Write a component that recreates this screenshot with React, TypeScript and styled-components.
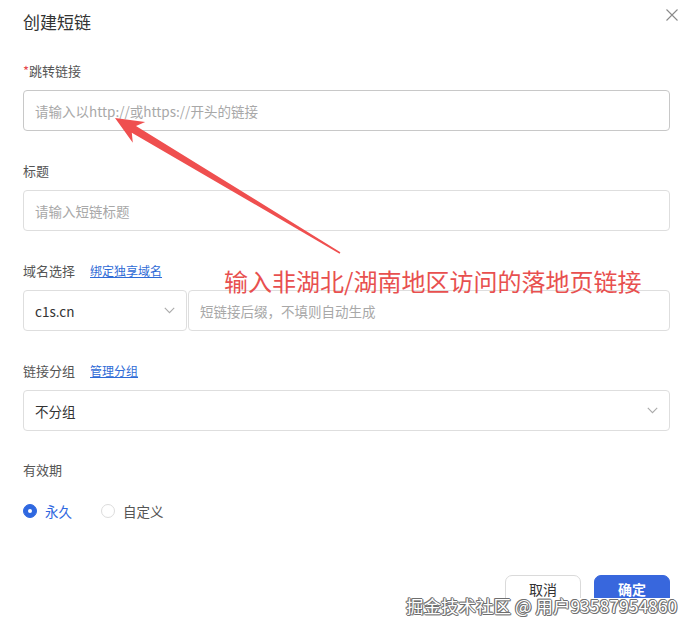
import React from "react";
import styled, { createGlobalStyle } from "styled-components";

const Global = createGlobalStyle`
  html, body { margin: 0; padding: 0; background: #fff; }
  body { font-family: "Noto Sans CJK SC", "Noto Sans", sans-serif; }
  * { box-sizing: border-box; }
`;

const Page = styled.div`
  position: relative;
  width: 694px;
  height: 632px;
  overflow: hidden;
  background: #fff;
  padding: 0 24px 0 23px;
`;

const Header = styled.div`
  display: flex;
  justify-content: space-between;
  align-items: center;
  height: 44px;
`;

const Title = styled.div`
  font-size: 17px;
  color: #333;
  line-height: 20px;
`;

const Close = styled.button`
  border: none;
  background: none;
  padding: 0;
  margin: -14px -9px 0 0;
  width: 14px;
  height: 14px;
  display: flex;
  align-items: center;
  justify-content: center;
`;

const Field = styled.div<{ $gap?: number }>`
  display: flex;
  flex-direction: column;
  margin-top: ${(p) => p.$gap ?? 29}px;
`;

const LabelRow = styled.div`
  display: flex;
  align-items: center;
  gap: 15px;
  height: 20px;
  margin-bottom: 10px;
`;

const Label = styled.span`
  font-size: 13px;
  color: #555;
`;

const Star = styled.span`
  color: #e5484d;
`;

const Link = styled.a`
  font-size: 12px;
  color: #2f6bd6;
  text-decoration: underline;
`;

const Box = styled.div<{ $strong?: boolean; $grow?: boolean; $w?: number }>`
  height: 41px;
  border: 1px solid ${(p) => (p.$strong ? "#c8c8c8" : "#dedede")};
  border-radius: 4px;
  display: flex;
  align-items: center;
  justify-content: space-between;
  padding: 0 11px;
  ${(p) => (p.$grow ? "flex: 1;" : "")}
  ${(p) => (p.$w ? `width: ${p.$w}px; flex: none;` : "")}
`;

const Placeholder = styled.span`
  font-size: 13.5px;
  color: #a8a8a8;
`;

const Value = styled.span`
  font-size: 13.5px;
  color: #333;
`;

const Combo = styled.div`
  display: flex;
  gap: 1px;
`;

const RadioRow = styled.div`
  display: flex;
  align-items: center;
  gap: 29px;
  margin-top: 12px;
`;

const RadioItem = styled.label`
  display: flex;
  align-items: center;
  gap: 8px;
`;

const RadioDot = styled.span<{ $on?: boolean }>`
  width: 14px;
  height: 14px;
  border-radius: 50%;
  ${(p) =>
    p.$on
      ? "background: #2f68e0; border: 1px solid #2f68e0;"
      : "border: 1px solid #dcdcdc; background: #fff;"}
  position: relative;
  &::after {
    content: "";
    display: ${(p) => (p.$on ? "block" : "none")};
    position: absolute;
    left: 50%;
    top: 50%;
    width: 4px;
    height: 4px;
    margin: -2px 0 0 -2px;
    border-radius: 50%;
    background: #fff;
  }
`;

const RadioText = styled.span<{ $on?: boolean }>`
  font-size: 13.5px;
  color: ${(p) => (p.$on ? "#2f68e0" : "#555")};
`;

const Footer = styled.div`
  display: flex;
  justify-content: flex-end;
  gap: 13px;
  margin-top: 54px;
`;

const Btn = styled.button<{ $primary?: boolean }>`
  width: 76px;
  height: 32px;
  border-radius: 7px;
  font-family: inherit;
  font-size: 14px;
  padding: 0 0 4px;
  ${(p) =>
    p.$primary
      ? "background: #3867dd; color: #fff; border: 1px solid #3867dd; font-weight: 600;"
      : "background: #fff; color: #333; border: 1px solid #dadada;"}
`;

const Annotation = styled.div`
  position: absolute;
  left: 224px;
  top: 264px;
  font-size: 24px;
  line-height: 34px;
  color: #e8504f;
  white-space: nowrap;
`;

const ArrowSvg = styled.svg`
  position: absolute;
  left: 0;
  top: 0;
  pointer-events: none;
`;

const Watermark = styled.div`
  position: absolute;
  left: 404px;
  top: 598px;
  padding: 0 2px;
  font-size: 17.5px;
  line-height: 15px;
  height: 34px;
  color: #fff;
  background: #fff;
  white-space: nowrap;
  text-shadow: -1px 0 #6e6e6e, 1px 0 #6e6e6e, 0 1px #6e6e6e, 0 -1px #6e6e6e,
    1px 1px #888, -1px -1px #888;
`;

const Chevron = () => (
  <svg width="11" height="7" viewBox="0 0 11 7">
    <path d="M0.8 0.8 L5.5 5.6 L10.2 0.8" fill="none" stroke="#aaa" strokeWidth="1.1" />
  </svg>
);

export default function App() {
  return (
    <>
      <Global />
      <Page>
        <Header>
          <Title>创建短链</Title>
          <Close aria-label="close">
            <svg width="12" height="12" viewBox="0 0 12 12">
              <path d="M0.5 0.5 L11.5 11.5 M11.5 0.5 L0.5 11.5" stroke="#8a8a8a" strokeWidth="1.1" />
            </svg>
          </Close>
        </Header>

        <Field $gap={16}>
          <LabelRow>
            <Label>
              <Star>*</Star>跳转链接
            </Label>
          </LabelRow>
          <Box $strong>
            <Placeholder>请输入以http://或https://开头的链接</Placeholder>
          </Box>
        </Field>

        <Field>
          <LabelRow>
            <Label>标题</Label>
          </LabelRow>
          <Box>
            <Placeholder>请输入短链标题</Placeholder>
          </Box>
        </Field>

        <Field>
          <LabelRow>
            <Label>域名选择</Label>
            <Link>绑定独享域名</Link>
          </LabelRow>
          <Combo>
            <Box $w={164}>
              <Value>c1s.cn</Value>
              <Chevron />
            </Box>
            <Box $grow>
              <Placeholder>短链接后缀，不填则自动生成</Placeholder>
            </Box>
          </Combo>
        </Field>

        <Field>
          <LabelRow>
            <Label>链接分组</Label>
            <Link>管理分组</Link>
          </LabelRow>
          <Box>
            <Value>不分组</Value>
            <Chevron />
          </Box>
        </Field>

        <Field $gap={28}>
          <LabelRow>
            <Label>有效期</Label>
          </LabelRow>
        </Field>
        <RadioRow>
          <RadioItem>
            <RadioDot $on />
            <RadioText $on>永久</RadioText>
          </RadioItem>
          <RadioItem>
            <RadioDot />
            <RadioText>自定义</RadioText>
          </RadioItem>
        </RadioRow>

        <Footer>
          <Btn>取消</Btn>
          <Btn $primary>确定</Btn>
        </Footer>

        <ArrowSvg width="694" height="632" viewBox="0 0 694 632">
          <polygon
            points="115,118 132.8,142.7 131.8,132.7 339.6,253.7 340.4,252.3 136,125.9 145.2,122.1"
            fill="#ef4f4f"
          />
        </ArrowSvg>
        <Annotation>输入非湖北/湖南地区访问的落地页链接</Annotation>
        <Watermark>掘金技术社区 @ 用户93587954860</Watermark>
      </Page>
    </>
  );
}
